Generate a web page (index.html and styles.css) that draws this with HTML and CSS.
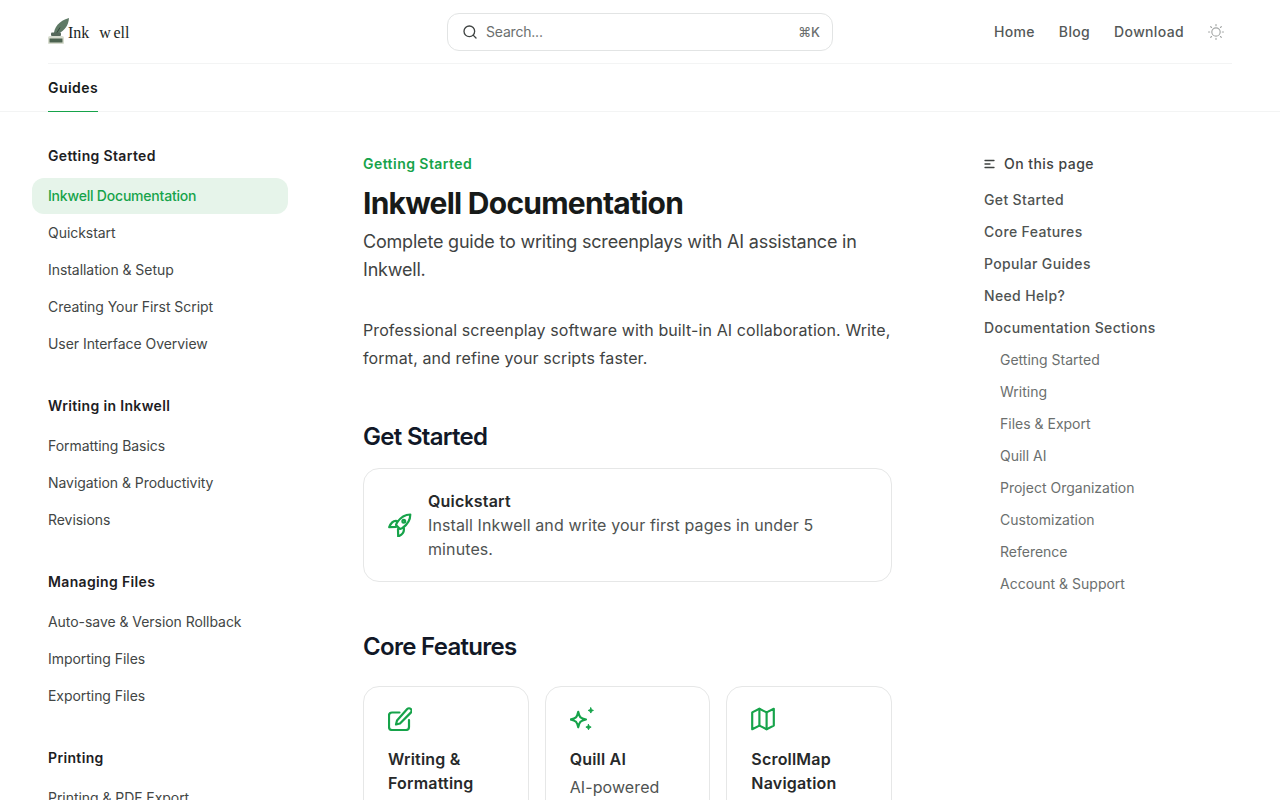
FILE: index.html
```html
<!DOCTYPE html>
<html lang="en">
<head>
<meta charset="utf-8">
<title>Inkwell Documentation</title>
<link rel="stylesheet" href="styles.css">
</head>
<body>
<header class="site-header">
  <div class="topbar">
    <a class="logo">
      <svg class="logo-mark" width="22" height="27" viewBox="0 0 22 27">
        <path d="M6 17C5.500 10 11 2.500 21 0C20.500 7 17 12.500 10.500 15.500L7 18.500Z" fill="#5f7a66"/>
        <path d="M6 19.500L12 9.500" stroke="#34483a" stroke-width="1"/>
        <rect x="3" y="14.500" width="10" height="3.500" rx="1" fill="#56695b"/>
        <path d="M2 18H14Q16 18 16 20V25Q16 26 15 26H1Q0 26 0 25V20Q0 18 2 18Z" fill="#d8ddcf"/>
        <rect x="1.500" y="20.500" width="13" height="4" fill="#4c6350"/>
      </svg>
      <span class="logo-text"><span>Ink</span><span class="logo-w">w</span><span class="logo-ell">ell</span></span>
    </a>
    <div class="search">
      <svg class="search-icon" width="16" height="16" viewBox="0 0 24 24" fill="none" stroke="currentColor" stroke-width="2" stroke-linecap="round"><circle cx="11" cy="11" r="8"/><path d="m21 21-4.300-4.300"/></svg>
      <span class="search-label">Search...</span>
      <span class="search-key">⌘K</span>
    </div>
    <nav class="top-nav">
      <a>Home</a>
      <a>Blog</a>
      <a>Download</a>
      <svg class="sun" width="16" height="16" viewBox="1.500 1.500 21 21" fill="none" stroke="currentColor" stroke-width="1.500" stroke-linecap="round"><circle cx="12" cy="12" r="5.500"/><path d="M12 2.200v1.500M12 20.300v1.500M5 5l1.100 1.100M17.900 17.900L19 19M2.200 12h1.500M20.300 12h1.500M6.100 17.900L5 19M19 5l-1.100 1.100"/></svg>
    </nav>
  </div>
  <div class="tabs"><a class="tab">Guides</a></div>
</header>

<div class="layout">
  <aside class="sidebar">
    <section class="nav-group">
      <h5>Getting Started</h5>
      <ul>
        <li class="active">Inkwell Documentation</li>
        <li>Quickstart</li>
        <li>Installation &amp; Setup</li>
        <li>Creating Your First Script</li>
        <li>User Interface Overview</li>
      </ul>
    </section>
    <section class="nav-group">
      <h5>Writing in Inkwell</h5>
      <ul>
        <li>Formatting Basics</li>
        <li>Navigation &amp; Productivity</li>
        <li>Revisions</li>
      </ul>
    </section>
    <section class="nav-group">
      <h5>Managing Files</h5>
      <ul>
        <li>Auto-save &amp; Version Rollback</li>
        <li>Importing Files</li>
        <li>Exporting Files</li>
      </ul>
    </section>
    <section class="nav-group">
      <h5>Printing</h5>
      <ul>
        <li>Printing &amp; PDF Export</li>
      </ul>
    </section>
  </aside>

  <main class="content">
    <div class="eyebrow">Getting Started</div>
    <h1>Inkwell Documentation</h1>
    <p class="lead">Complete guide to writing screenplays with AI assistance in Inkwell.</p>
    <p class="intro">Professional screenplay software with built-in AI collaboration. Write, format, and refine your scripts faster.</p>

    <h2 class="h-start">Get Started</h2>
    <div class="card card-row">
      <svg class="icon" width="24" height="24" viewBox="0 0 24 24" fill="none" stroke="currentColor" stroke-width="2.200" stroke-linecap="round" stroke-linejoin="round"><path d="M22.300 1.500C17 1.500 12.500 4.500 9 9.500L8 12L12 16L14.500 15C19.500 11.500 22.300 7 22.300 1.500Z"/><path d="M9 8C6 7.500 3 9.500 1.200 14.200L8 14"/><path d="M15.800 15C16.500 18.500 14.500 21.500 10.200 23.500L10 16"/><circle cx="15.800" cy="8.200" r="1.400"/></svg>
      <div>
        <h3>Quickstart</h3>
        <p>Install Inkwell and write your first pages in under 5 minutes.</p>
      </div>
    </div>

    <h2 class="h-core">Core Features</h2>
    <div class="card-grid">
      <div class="card">
        <svg class="icon" width="24" height="24" viewBox="0 0 24 24" fill="none" stroke="currentColor" stroke-width="2.200" stroke-linecap="round" stroke-linejoin="round"><path d="M11.500 5.500H4a3 3 0 0 0-3 3V20a3 3 0 0 0 3 3h14a3 3 0 0 0 3-3v-7"/><path d="M19.200 2a2.500 2.500 0 0 1 3.600 3.600L12 16.500l-4 1 1-4Z"/></svg>
        <h3>Writing &amp; Formatting</h3>
      </div>
      <div class="card">
        <svg class="icon" width="24" height="24" viewBox="1.800 1 21 21" fill="none" stroke="currentColor" stroke-width="1.900" stroke-linecap="round" stroke-linejoin="round"><path d="M9.813 15.904 9 18.750l-.813-2.846a4.500 4.500 0 0 0-3.090-3.090L2.250 12l2.846-.813a4.500 4.500 0 0 0 3.090-3.090L9 5.250l.813 2.846a4.500 4.500 0 0 0 3.090 3.090L15.750 12l-2.846.813a4.500 4.500 0 0 0-3.090 3.090Z"/><path class="filled" stroke-width="0.800" d="M20 1.700 20.700 3.300 22.300 4 20.700 4.700 20 6.300 19.300 4.700 17.700 4 19.300 3.300Z"/><path class="filled" stroke-width="0.800" d="M18 16.300 18.700 17.900 20.300 18.600 18.700 19.300 18 20.900 17.300 19.300 15.700 18.600 17.300 17.900Z"/></svg>
        <h3>Quill AI</h3>
        <p class="card-desc">AI-powered</p>
      </div>
      <div class="card">
        <svg class="icon" width="24" height="24" viewBox="2 2 20 20" fill="none" stroke="currentColor" stroke-width="1.800" stroke-linecap="round" stroke-linejoin="round"><path d="M3 6.500 9 3.500l6 3 6-3V17.500l-6 3-6-3-6 3Z"/><path d="M9 3.500V17.500"/><path d="M15 6.500V20.500"/></svg>
        <h3>ScrollMap Navigation</h3>
      </div>
    </div>
  </main>

  <aside class="toc">
    <div class="toc-title">
      <svg width="12" height="12" viewBox="0 0 12 12" fill="none" stroke="currentColor" stroke-width="1.300" stroke-linecap="round"><path d="M1 2.500h9M1 6h5M1 9.500h9"/></svg>
      On this page
    </div>
    <ul>
      <li>Get Started</li>
      <li>Core Features</li>
      <li>Popular Guides</li>
      <li>Need Help?</li>
      <li>Documentation Sections</li>
      <li class="sub">Getting Started</li>
      <li class="sub">Writing</li>
      <li class="sub">Files &amp; Export</li>
      <li class="sub">Quill AI</li>
      <li class="sub">Project Organization</li>
      <li class="sub">Customization</li>
      <li class="sub">Reference</li>
      <li class="sub">Account &amp; Support</li>
    </ul>
  </aside>
</div>
</body>
</html>
```
FILE: styles.css
```css
* { box-sizing: border-box; }
html, body { height: 100%; overflow: hidden; }
body {
  margin: 0;
  background: #fff;
  color: #171a19;
  font-family: Inter, "Liberation Sans", sans-serif;
  font-size: 14px;
  font-optical-sizing: none;
}
h1, h2, h3, h5, p, ul { margin: 0; padding: 0; }
ul { list-style: none; }

.site-header { border-bottom: 1px solid #f3f4f4; padding: 0 48px; height: 112px; }
.topbar {
  height: 64px;
  display: grid;
  grid-template-columns: 1fr 386px 1fr;
  align-items: center;
  border-bottom: 1px solid #f3f4f4;
}
.logo { display: flex; align-items: flex-start; height: 27px; margin-top: -1px; }
.logo-mark { display: block; }
.logo-text {
  font-family: "Liberation Serif", serif;
  font-size: 16px;
  color: #1b1f1d;
  line-height: 20px;
  margin: 5px 0 0 -2px;
  display: flex;
}
.logo-w { margin-left: 10px; }
.logo-ell { margin-left: 2.500px; }

.search {
  height: 38px;
  border: 1px solid #e2e4e4;
  border-radius: 12px;
  padding: 0 12px 0 14px;
  display: flex;
  align-items: center;
  color: #6b6f6e;
}
.search-icon { color: #3f4342; margin-right: 8px; }
.search-label { flex: 1; font-size: 14px; letter-spacing: -0.2px; }
.search-key { font-size: 13px; font-weight: 500; }

.top-nav {
  display: flex;
  justify-content: flex-end;
  align-items: center;
  gap: 24px;
  padding-right: 8px;
  font-weight: 500;
  color: #555958;
  letter-spacing: 0.35px;
}
.sun { color: #a3a6a5; }

.tabs { height: 47px; display: flex; }
.tab {
  font-weight: 600;
  color: #171a19;
  line-height: 47px;
  border-bottom: 1px solid #16a34a;
  height: 48px;
  letter-spacing: 0.45px;
}

.layout { display: flex; align-items: flex-start; }

.sidebar { margin-left: 32px; padding-top: 34px; flex: none; width: 256px; }
.nav-group { margin-bottom: 34px; }
.nav-group h5 {
  font-size: 14px;
  line-height: 20px;
  font-weight: 600;
  color: #1d201f;
  padding-left: 16px;
  margin-bottom: 12px;
  letter-spacing: 0.35px;
}
.nav-group ul { display: flex; flex-direction: column; gap: 1px; }
.nav-group li {
  height: 36px;
  line-height: 36px;
  padding-left: 16px;
  border-radius: 12px;
  color: #424645;
  letter-spacing: -0.05px;
}
.nav-group li.active { background: #e6f4ea; color: #16a34a; font-weight: 500; letter-spacing: -0.2px; }

.content { width: 529px; margin-left: 75px; padding-top: 42px; flex: none; color: #3f4342; }
.eyebrow { font-weight: 600; color: #16a34a; line-height: 20px; letter-spacing: 0.45px; }
h1 {
  font-size: 30px;
  line-height: 36px;
  font-weight: 700;
  letter-spacing: -0.75px;
  color: #171a19;
  margin-top: 11px;
}
.lead { font-size: 18px; line-height: 28px; margin-top: 7px; letter-spacing: -0.2px; }
.intro { font-size: 16px; line-height: 28px; margin-top: 32px; letter-spacing: 0.1px; }
h2 { font-size: 24px; line-height: 32px; font-weight: 600; letter-spacing: -0.7px; color: #111827; }
.h-start { margin-top: 49px; }
.h-core { margin-top: 49px; }
.card {
  border: 1px solid #e6e7e7;
  border-radius: 16px;
  padding: 20px 24px;
  color: #4f5352;
}
.card h3 { font-size: 16px; line-height: 24px; font-weight: 600; color: #27292a; letter-spacing: 0.2px; }
.card p { font-size: 16px; line-height: 24px; letter-spacing: 0.1px; }
.card .card-desc { margin-top: 4px; }
.icon { color: #16a34a; display: block; flex: none; }
.filled { fill: currentColor; }
.card-row { display: flex; align-items: center; gap: 16px; margin-top: 15px; }
.card-grid { display: grid; grid-template-columns: repeat(3, 1fr); gap: 16px; margin-top: 23px; }
.card-grid .card { height: 200px; }
.card-grid .icon { margin-bottom: 16px; }

.toc { width: 248px; margin-left: 92px; padding-top: 42px; flex: none; }
.toc-title {
  display: flex; align-items: center; gap: 8px;
  font-weight: 500; color: #3f4342; line-height: 20px;
  letter-spacing: 0.45px;
}
.toc ul { margin-top: 10px; }
.toc li { height: 32px; line-height: 32px; font-weight: 500; color: #4f5352; letter-spacing: 0.35px; }
.toc li.sub { padding-left: 16px; font-weight: 400; color: #6b6f6e; letter-spacing: 0; }
```
